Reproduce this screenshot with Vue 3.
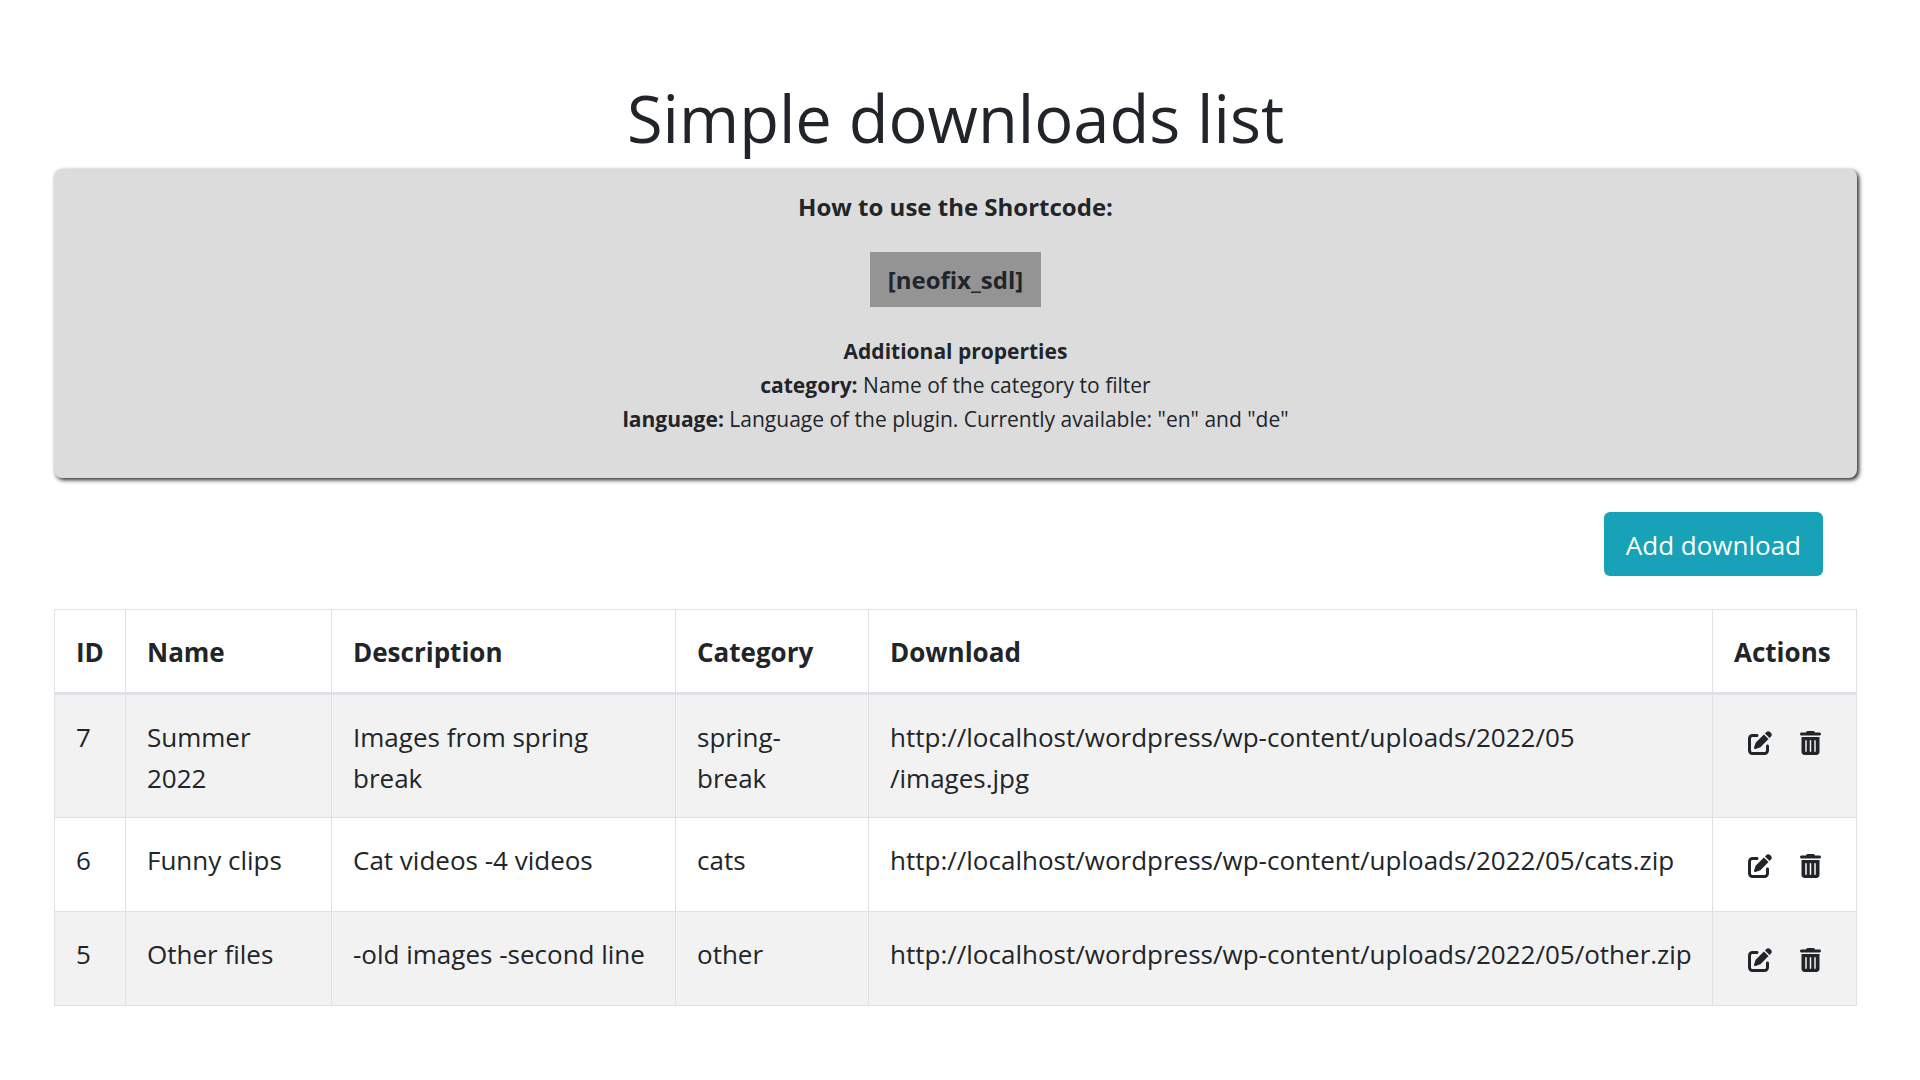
<script setup>
const downloads = [
  {
    id: 7,
    name: 'Summer\n2022',
    description: 'Images from spring\nbreak',
    category: 'spring-\nbreak',
    url: 'http://localhost/wordpress/wp-content/uploads/2022/05\n/images.jpg',
  },
  {
    id: 6,
    name: 'Funny clips',
    description: 'Cat videos -4 videos',
    category: 'cats',
    url: 'http://localhost/wordpress/wp-content/uploads/2022/05/cats.zip',
  },
  {
    id: 5,
    name: 'Other files',
    description: '-old images -second line',
    category: 'other',
    url: 'http://localhost/wordpress/wp-content/uploads/2022/05/other.zip',
  },
]
</script>

<template>
  <main class="page">
    <h1 class="title">Simple downloads list</h1>

    <section class="help">
      <h2 class="help-title">How to use the Shortcode:</h2>
      <strong class="shortcode">[neofix_sdl]</strong>
      <div class="properties">
        <p><strong>Additional properties</strong></p>
        <p><strong>category:</strong> Name of the category to filter</p>
        <p><strong>language:</strong> Language of the plugin. Currently available: "en" and "de"</p>
      </div>
    </section>

    <div class="toolbar">
      <button type="button" class="add">Add download</button>
    </div>

    <table class="downloads">
      <colgroup>
        <col class="col-id" />
        <col class="col-name" />
        <col class="col-description" />
        <col class="col-category" />
        <col />
        <col class="col-actions" />
      </colgroup>
      <thead>
        <tr>
          <th scope="col">ID</th>
          <th scope="col">Name</th>
          <th scope="col">Description</th>
          <th scope="col">Category</th>
          <th scope="col">Download</th>
          <th scope="col">Actions</th>
        </tr>
      </thead>
      <tbody>
        <tr v-for="item in downloads" :key="item.id">
          <td>{{ item.id }}</td>
          <td>{{ item.name }}</td>
          <td>{{ item.description }}</td>
          <td>{{ item.category }}</td>
          <td>{{ item.url }}</td>
          <td>
            <div class="actions">
              <button type="button" class="icon-button" aria-label="Edit">
                <svg width="24" height="24" viewBox="0 0 512 512" aria-hidden="true">
                  <path d="M471.6 21.7c-21.9-21.9-57.3-21.9-79.2 0L362.3 51.7l97.9 97.9 30.1-30.1c21.9-21.9 21.9-57.3 0-79.2L471.6 21.7zm-299.2 220c-6.1 6.1-10.8 13.6-13.5 21.9l-29.6 88.8c-2.9 8.6-.6 18.1 5.8 24.6s15.9 8.7 24.6 5.8l88.8-29.6c8.2-2.7 15.7-7.4 21.9-13.5L437.7 172.3 339.7 74.3 172.4 241.7zM96 64C43 64 0 107 0 160V416c0 53 43 96 96 96H352c53 0 96-43 96-96V320c0-17.7-14.3-32-32-32s-32 14.3-32 32v96c0 17.7-14.3 32-32 32H96c-17.7 0-32-14.3-32-32V160c0-17.7 14.3-32 32-32h96c17.7 0 32-14.3 32-32s-14.3-32-32-32H96z" />
                </svg>
              </button>
              <button type="button" class="icon-button" aria-label="Delete">
                <svg width="21" height="24" viewBox="0 0 448 512" aria-hidden="true">
                  <path d="M135.2 17.7L128 32H32C14.3 32 0 46.3 0 64S14.3 96 32 96H416c17.7 0 32-14.3 32-32s-14.3-32-32-32H320l-7.2-14.3C307.4 6.8 296.3 0 284.2 0H163.8c-12.1 0-23.2 6.8-28.6 17.7zM416 128H32V448c0 35.3 28.7 64 64 64H352c35.3 0 64-28.7 64-64V128zM144 208V432c0 8.8-7.2 16-16 16s-16-7.2-16-16V208c0-8.8 7.2-16 16-16s16 7.2 16 16zm96 0V432c0 8.8-7.2 16-16 16s-16-7.2-16-16V208c0-8.8 7.2-16 16-16s16 7.2 16 16zm96 0V432c0 8.8-7.2 16-16 16s-16-7.2-16-16V208c0-8.8 7.2-16 16-16s16 7.2 16 16z" />
                </svg>
              </button>
            </div>
          </td>
        </tr>
      </tbody>
    </table>
  </main>
</template>

<style>
body {
  margin: 0;
  background: #fff;
}
</style>

<style scoped>
.page {
  box-sizing: border-box;
  padding: 78px 63px 72px 54px;
  color: #212529;
  font-family: "Segoe UI", "Open Sans", "Noto Sans", sans-serif;
  font-size: 26px;
  line-height: 41px;
}

.title {
  margin: 0 0 10px;
  font-size: 65px;
  font-weight: 400;
  line-height: 81px;
  text-align: center;
}

.help {
  display: flex;
  flex-direction: column;
  align-items: center;
  padding: 17px 20px 42px;
  border-radius: 8px;
  background: #dcdcdc;
  box-shadow: 2px 2px 4px #212529;
  text-align: center;
}

.help-title {
  margin: 0 0 25px;
  font-size: 24px;
  font-weight: 700;
  line-height: 41px;
}

.shortcode {
  padding: 7px 18px;
  background: #949494;
  font-size: 24px;
}

.properties {
  margin-top: 27px;
  font-size: 21px;
  line-height: 34px;
}

.properties p {
  margin: 0;
}

.toolbar {
  display: flex;
  justify-content: flex-end;
  padding: 34px 34px 33px;
}

.add {
  padding: 13px 22px 10px;
  border: 0;
  border-radius: 6px;
  background: #17a2b8;
  color: #fff;
  font: inherit;
  cursor: pointer;
}

.downloads {
  width: 100%;
  border-collapse: collapse;
  table-layout: fixed;
}

.col-id {
  width: 71px;
}

.col-name {
  width: 206px;
}

.col-description {
  width: 344px;
}

.col-category {
  width: 193px;
}

.col-actions {
  width: 144px;
}

.downloads th,
.downloads td {
  padding: 22px 20px 18px 21px;
  border: 1px solid #dee2e6;
  text-align: left;
  vertical-align: top;
  white-space: pre;
}

.downloads th {
  padding-bottom: 19px;
  border-bottom-width: 3px;
  font-weight: 700;
}

.downloads tbody tr:nth-child(odd) {
  background: #f2f2f2;
}

.actions {
  display: flex;
}

.icon-button {
  display: flex;
  padding: 14px 14px 15px;
  border: 0;
  background: transparent;
  color: inherit;
  cursor: pointer;
}

.icon-button svg {
  flex: none;
  fill: currentColor;
}
</style>
